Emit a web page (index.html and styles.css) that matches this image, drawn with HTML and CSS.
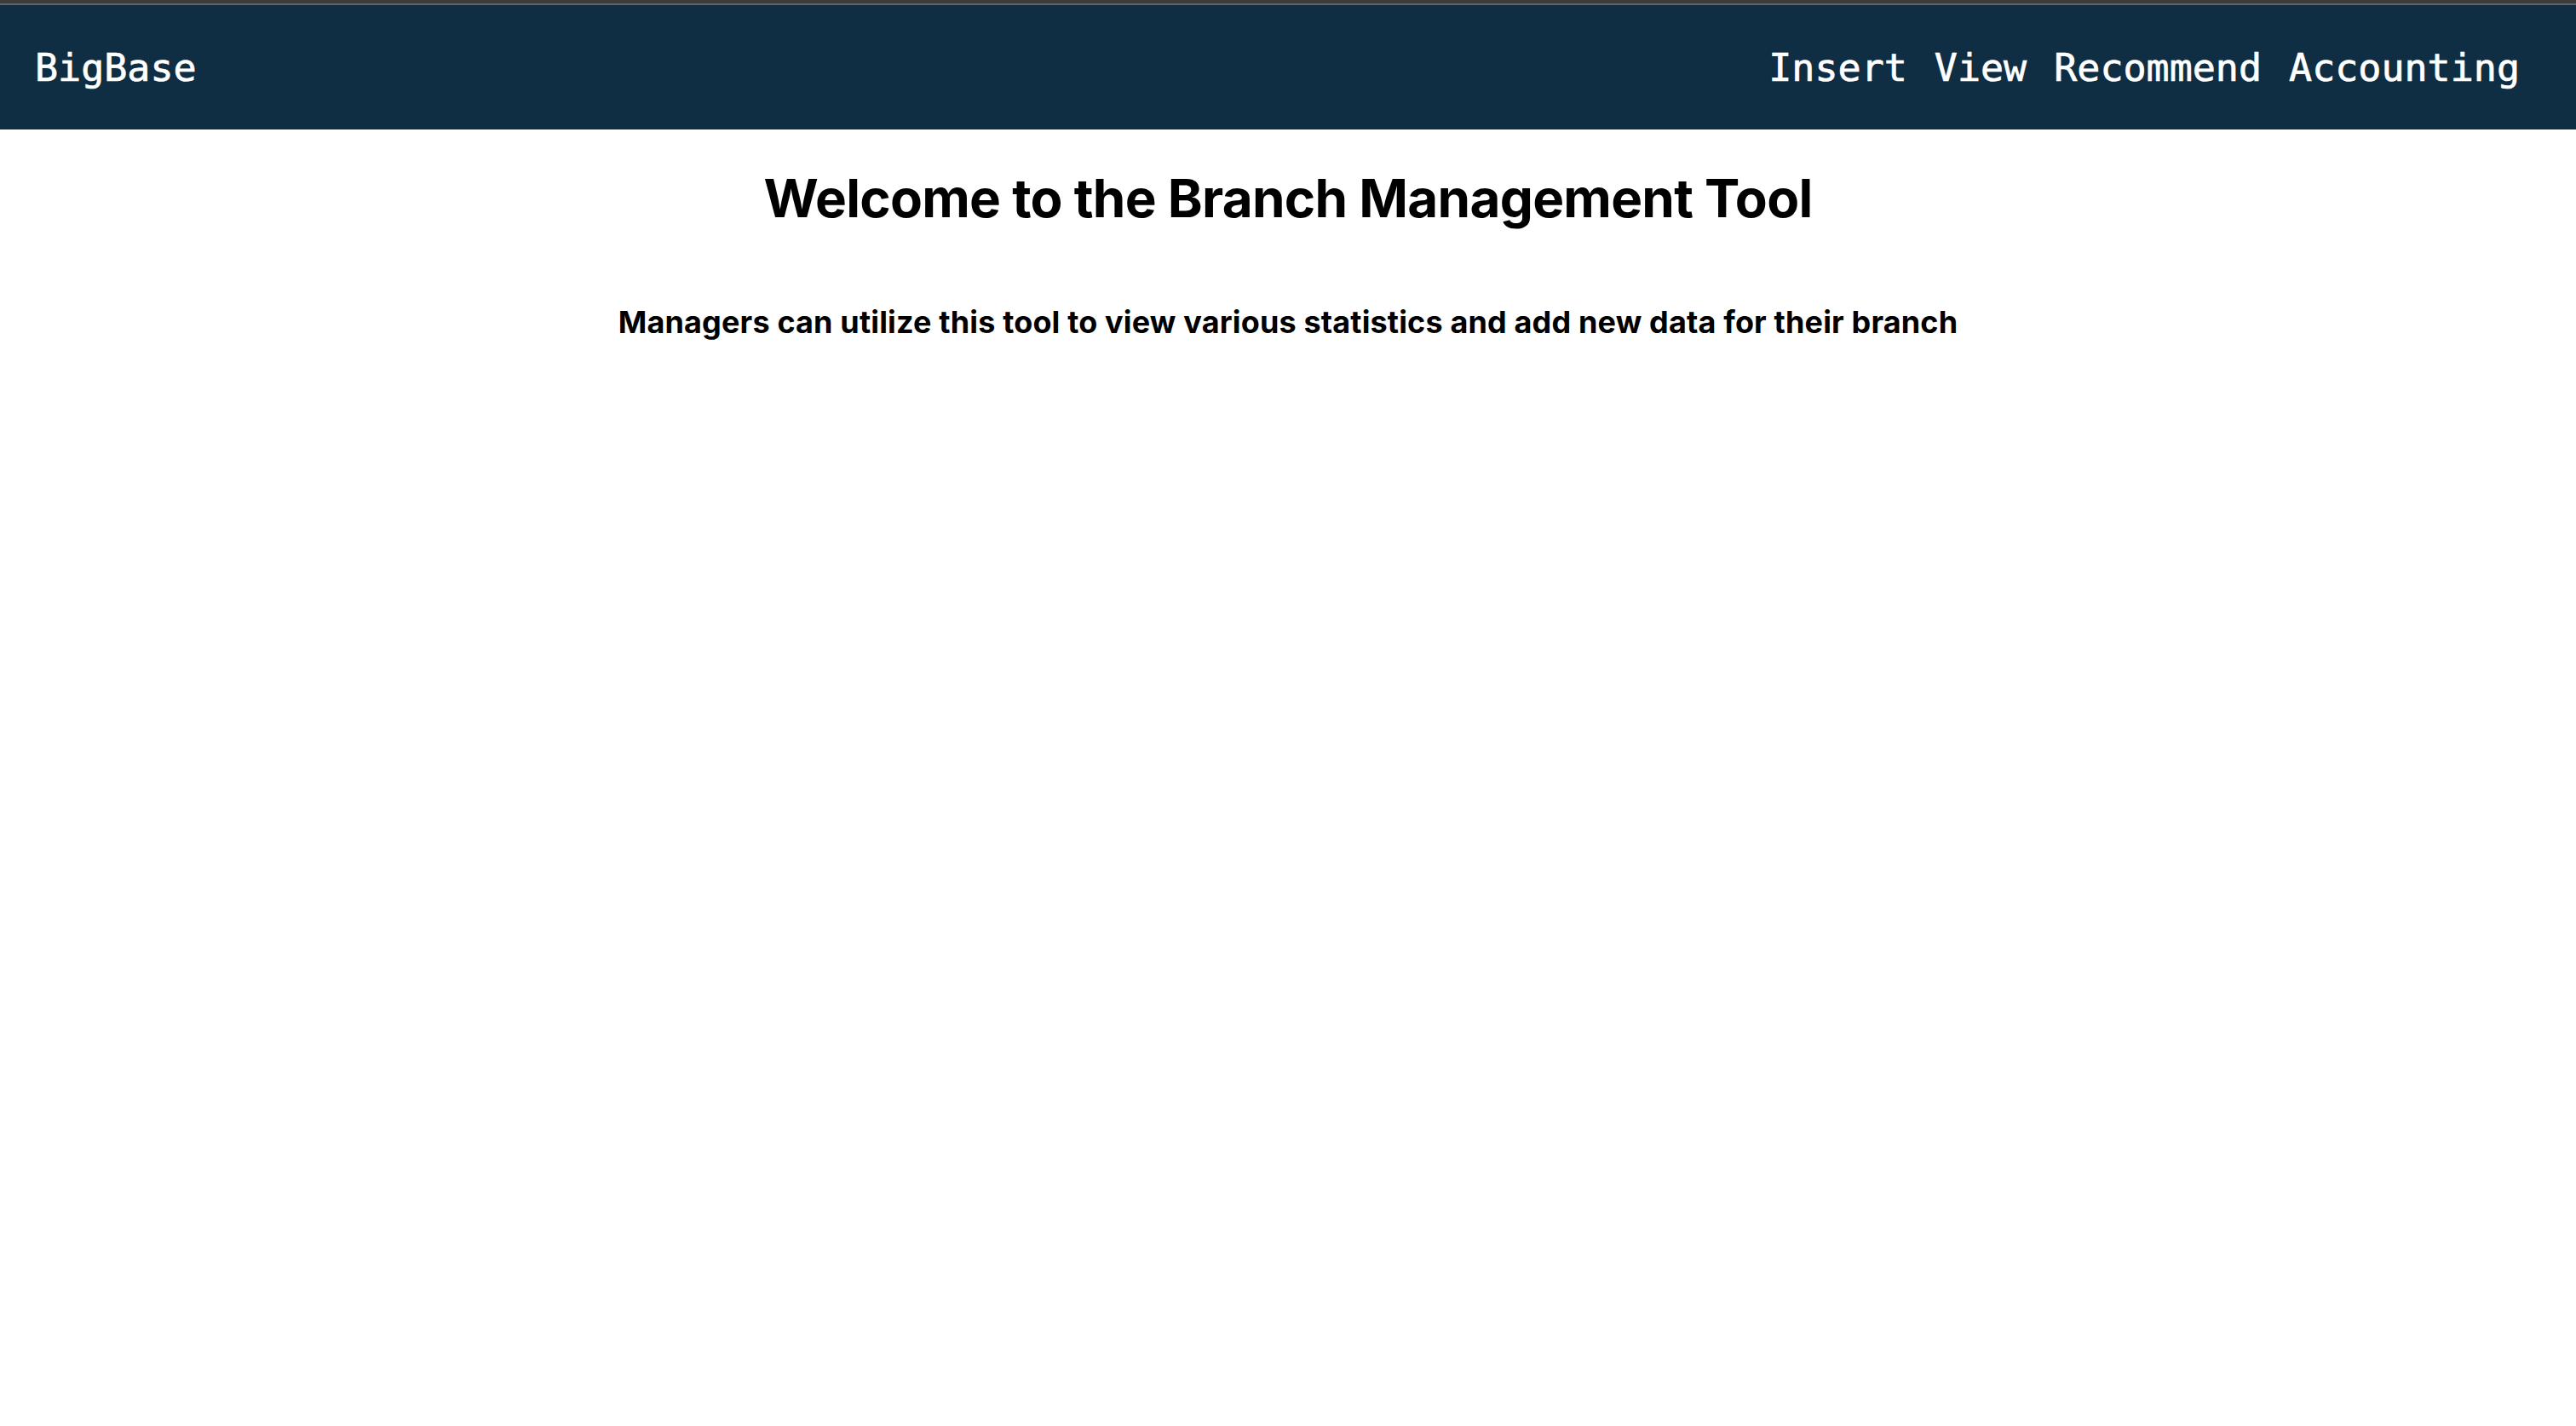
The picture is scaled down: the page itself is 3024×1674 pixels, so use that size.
FILE: index.html
```html
<!DOCTYPE html>
<html lang="en">
<head>
<meta charset="utf-8">
<title>BigBase</title>
<link rel="stylesheet" href="styles.css">
</head>
<body>
<div class="chrome"></div>
<nav class="navbar">
  <a class="brand" href="#">BigBase</a>
  <div class="links">
    <a href="#">Insert</a>
    <a href="#">View</a>
    <a href="#">Recommend</a>
    <a href="#">Accounting</a>
  </div>
</nav>
<main class="content">
  <h1 class="title">Welcome to the Branch Management Tool</h1>
  <h3 class="subtitle">Managers can utilize this tool to view various statistics and add new data for their branch</h3>
</main>
</body>
</html>
```

FILE: styles.css
```css
html, body {
  margin: 0;
  padding: 0;
  background: #ffffff;
}

body {
  font-family: Inter, "Noto Sans", sans-serif;
  color: #000;
}

.chrome {
  height: 4px;
  background: #3b3b3d;
  border-bottom: 2px solid #626265;
}

.navbar {
  height: 146px;
  background: #0f2e43;
  display: flex;
  align-items: center;
  justify-content: space-between;
  padding: 0 66px 0 41px;
  font-family: "DejaVu Sans Mono", "Liberation Mono", monospace;
  font-size: 45px;
}

.navbar a {
  color: #ffffff;
  text-decoration: none;
  -webkit-text-stroke: 0.7px #ffffff;
}

.links {
  display: flex;
  gap: 32px;
}

.content {
  text-align: center;
}

.title {
  font-size: 62px;
  font-weight: 700;
  line-height: 76px;
  letter-spacing: -0.75px;
  margin: 43px 0 0;
}

.subtitle {
  font-size: 36px;
  font-weight: 700;
  line-height: 44px;
  letter-spacing: 0.15px;
  margin: 85px 0 0;
}
```
